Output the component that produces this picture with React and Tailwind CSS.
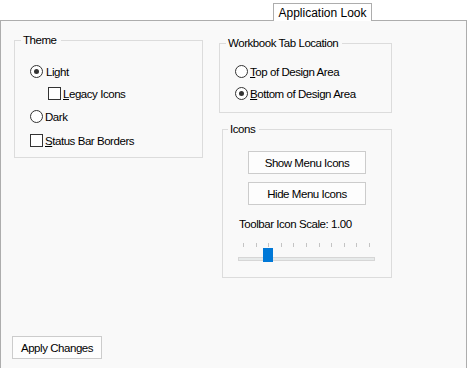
import React from "react";

const font = { fontFamily: '"Liberation Sans", Arial, sans-serif' };

function Radio({ checked }) {
  return (
    <span className="w-[13px] h-[13px] rounded-full border border-[#333333] bg-white flex items-center justify-center shrink-0">
      {checked && <span className="w-[5px] h-[5px] rounded-full bg-[#333333]" />}
    </span>
  );
}

function Check() {
  return <span className="w-[13px] h-[13px] border border-[#333333] bg-white shrink-0" />;
}

function Btn({ children, className = "" }) {
  return (
    <div
      className={
        "h-[23px] border border-[#cccccc] bg-[#fdfdfd] flex items-center justify-center text-black " +
        className
      }
    >
      {children}
    </div>
  );
}

function Legend({ children, ml = "ml-[6px]" }) {
  return (
    <legend className={ml + " pl-[2px] pr-[4px] leading-[14px] text-black"}>{children}</legend>
  );
}

export default function App() {
  const ticks = Array.from({ length: 11 });
  return (
    <div
      className="w-[469px] h-[368px] bg-white overflow-hidden text-[11.5px] leading-[14px] text-black tracking-[-0.45px]"
      style={font}
    >
      {/* tab strip */}
      <div className="h-[20px] flex justify-end pr-[97px]">
        <div className="relative z-10 mt-[3px] h-[18px] w-[99px] border border-b-0 border-[#adadad] bg-white flex items-center justify-center text-[12px] tracking-normal">
          Application Look
        </div>
      </div>

      {/* panel */}
      <div className="w-[467px] h-[348px] border border-b-0 border-[#adadad] bg-[#f9f9f9] flex flex-col">
        <div className="flex items-start pt-[12px] pl-[13px]">
          {/* Theme */}
          <fieldset className="w-[189px] border border-[#dcdcdc] pb-[10px]">
            <Legend>Theme</Legend>
            <div className="pl-[15px]">
              <div className="flex items-center h-[13px] mt-[18px] gap-[3px]">
                <Radio checked />
                <span>Light</span>
              </div>
              <div className="flex items-center h-[13px] mt-[9px] gap-[2px] pl-[18px]">
                <Check />
                <span>
                  <span className="underline">L</span>egacy Icons
                </span>
              </div>
              <div className="flex items-center h-[13px] mt-[10px] gap-[2px]">
                <Radio />
                <span>Dark</span>
              </div>
              <div className="flex items-center h-[13px] mt-[11px] gap-[2px]">
                <Check />
                <span>
                  <span className="underline">S</span>tatus Bar Borders
                </span>
              </div>
            </div>
          </fieldset>

          {/* right column */}
          <div className="ml-[16px] flex flex-col mt-[3px]">
            <fieldset className="w-[173px] border border-[#dcdcdc] pb-[12px]">
              <Legend>Workbook Tab Location</Legend>
              <div className="pl-[15px]">
                <div className="flex items-center h-[13px] mt-[15px] gap-[2px]">
                  <Radio />
                  <span>
                    <span className="underline">T</span>op of Design Area
                  </span>
                </div>
                <div className="flex items-center h-[13px] mt-[9px] gap-[2px]">
                  <Radio checked />
                  <span>
                    <span className="underline">B</span>ottom of Design Area
                  </span>
                </div>
              </div>
            </fieldset>

            <fieldset className="ml-[3px] mt-[9px] w-[170px] border border-[#dcdcdc] pb-[15px]">
              <Legend ml="ml-[5px]">Icons</Legend>
              <div className="flex flex-col items-center mt-[15px]">
                <Btn className="w-[118px]">Show Menu Icons</Btn>
                <Btn className="w-[118px] mt-[8px]">Hide Menu Icons</Btn>
              </div>
              <div className="pl-[16px] mt-[12px]">Toolbar Icon Scale: 1.00</div>
              <div className="pl-[15px] mt-[12px]">
                <div className="ml-[5px] w-[127px] h-[4px] flex justify-between">
                  {ticks.map((_, i) => (
                    <span key={i} className="w-px h-[4px] bg-[#c4c4c4]" />
                  ))}
                </div>
                <div className="relative mt-[1px] h-[14px] w-[137px]">
                  <div className="absolute left-0 right-0 top-[9px] h-[4px] border border-[#d6d6d6] bg-[#e7eaea]" />
                  <div className="absolute left-[25px] top-0 w-[10px] h-[14px] bg-[#0078d7]" />
                </div>
              </div>
            </fieldset>
          </div>
        </div>

        <div className="mt-auto mb-[9px] ml-[11px]">
          <Btn className="w-[90px]">Apply Changes</Btn>
        </div>
      </div>
    </div>
  );
}
